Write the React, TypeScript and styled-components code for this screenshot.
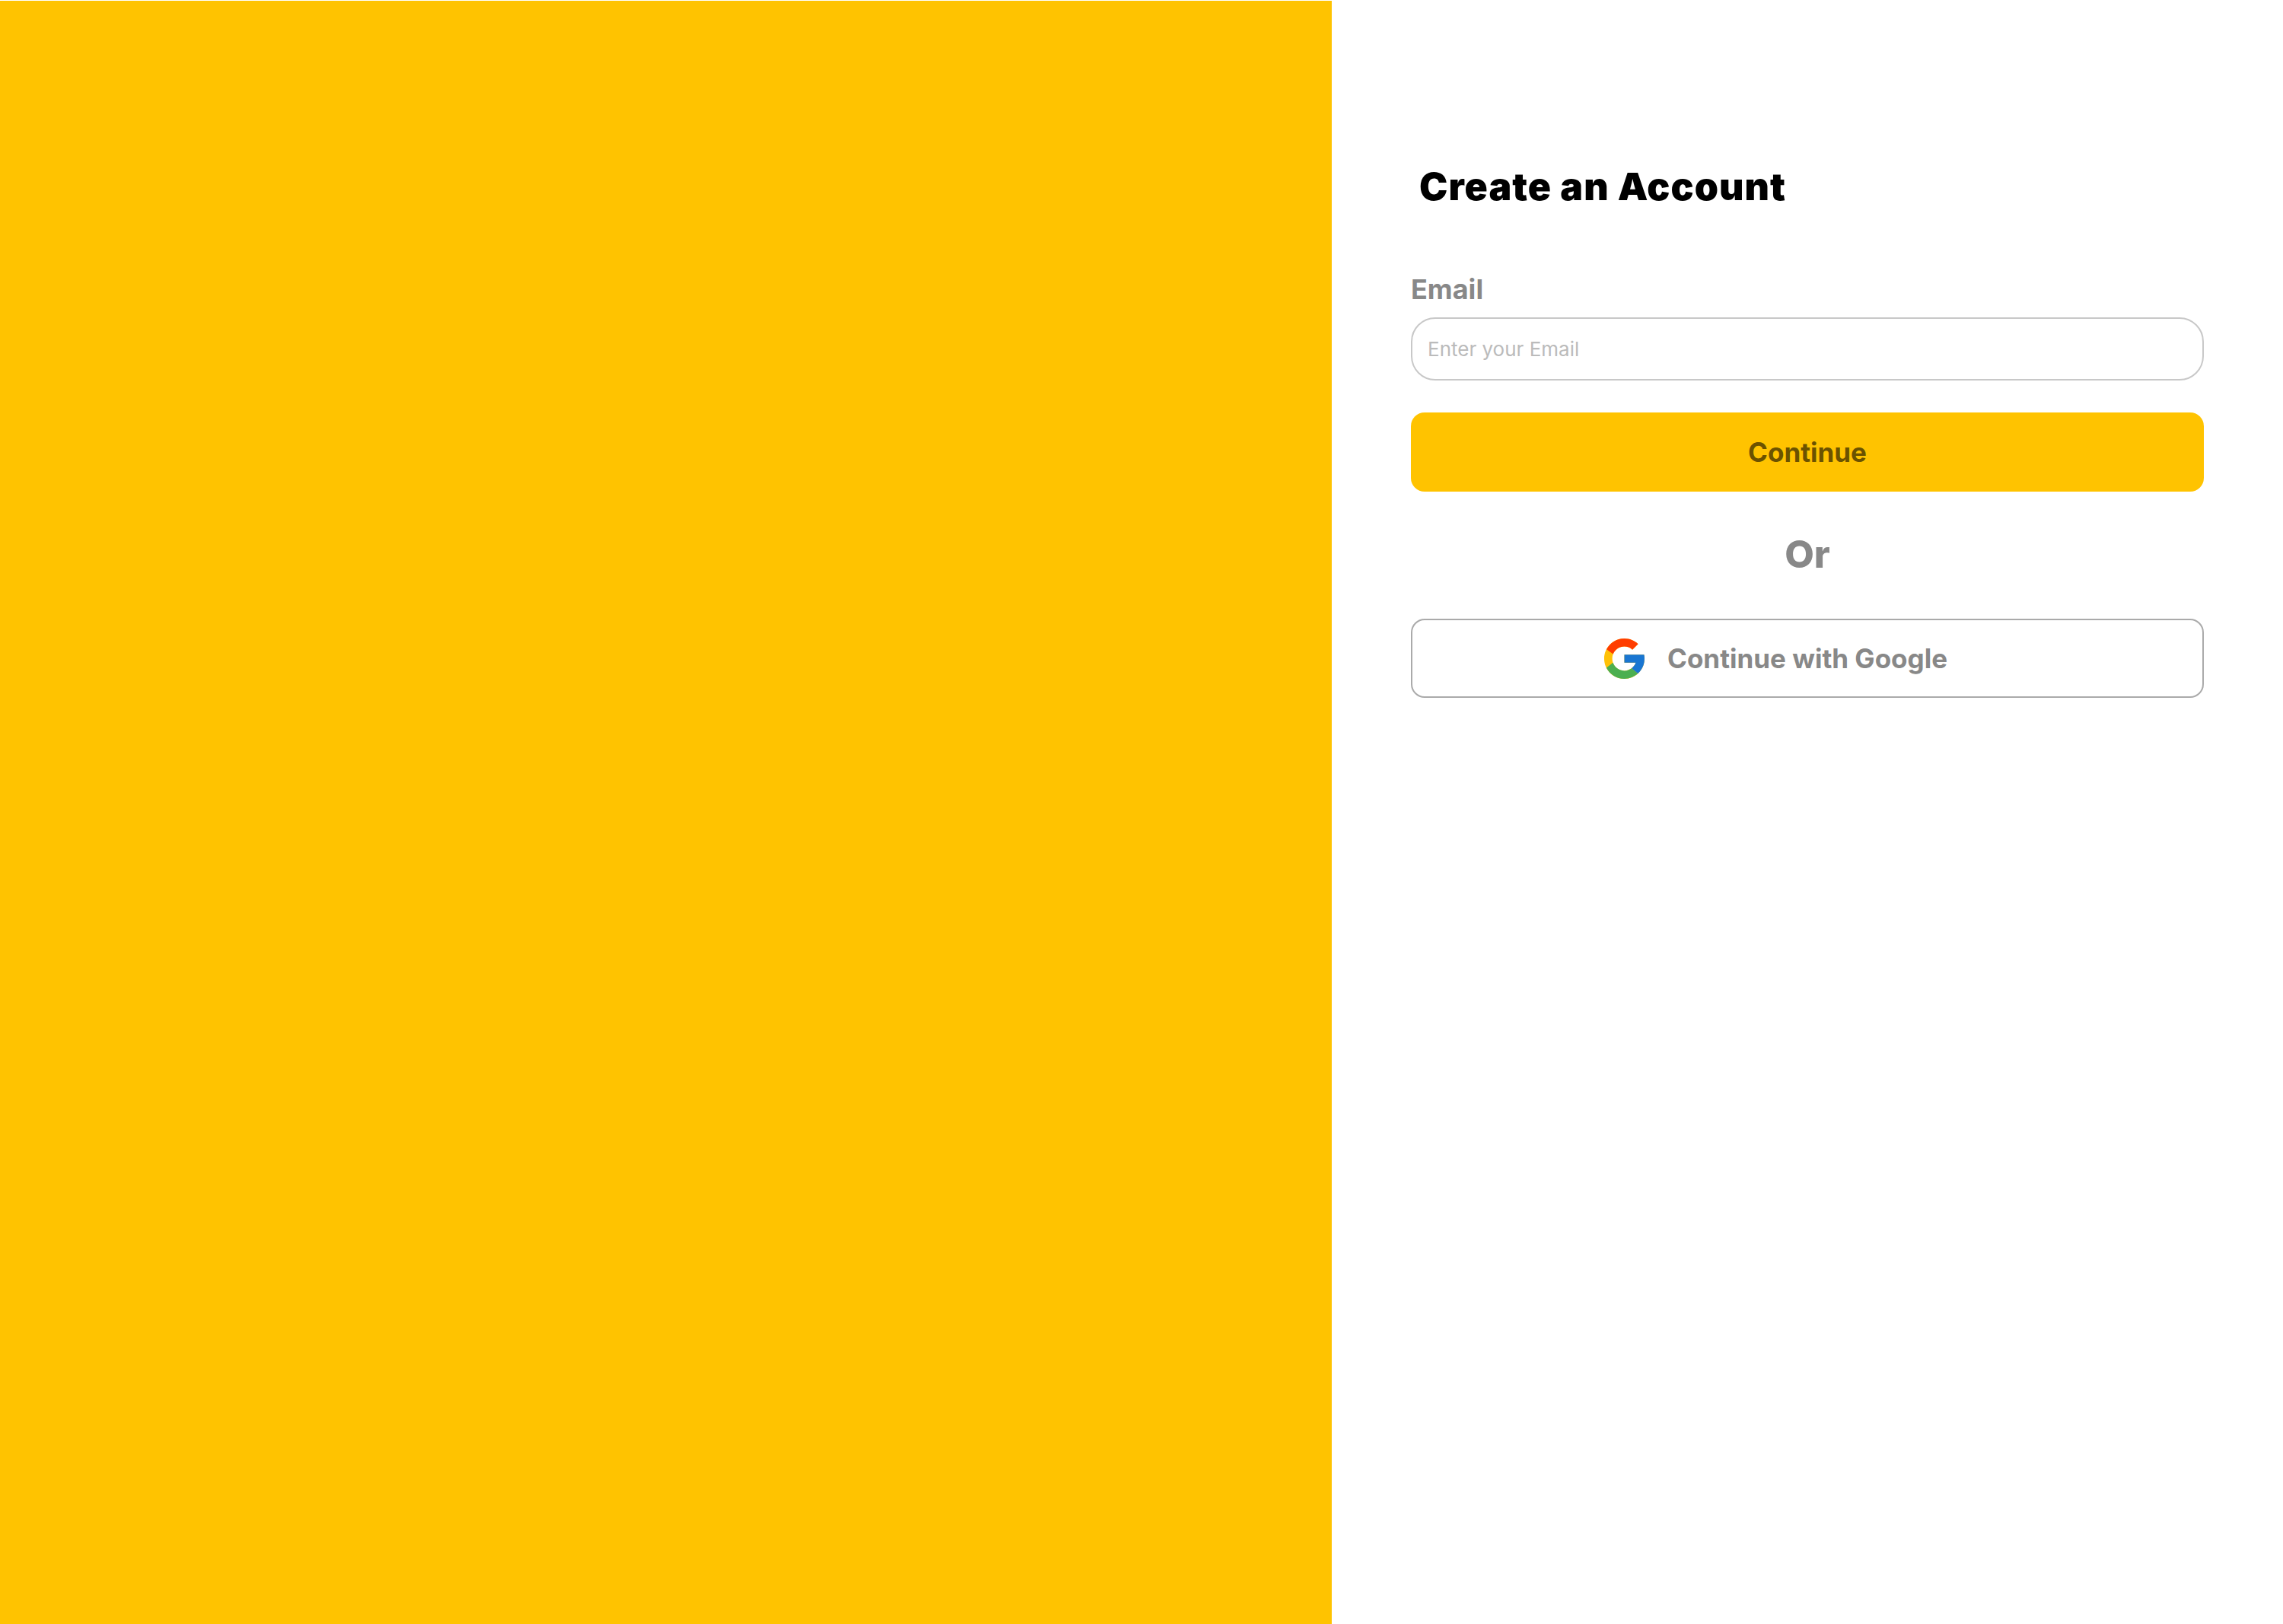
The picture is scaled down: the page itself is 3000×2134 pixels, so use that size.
import React from "react";
import styled, { createGlobalStyle } from "styled-components";

const GlobalStyle = createGlobalStyle`
  html, body { margin: 0; padding: 0; background: #ffffff; }
  * { box-sizing: border-box; }
  body { font-family: Inter, "Noto Sans", sans-serif; }
`;

const Page = styled.div`
  display: flex;
  width: 3000px;
  height: 2134px;
  background: #ffffff;
`;

const ColorPanel = styled.div`
  flex: 0 0 1750px;
  margin-top: 1px;
  background: #ffc300;
`;

const FormPanel = styled.main`
  flex: 1;
  padding: 210px 104px 0;
`;

const Title = styled.h1`
  margin: 0 0 78px 11px;
  height: 70px;
  font-size: 50px;
  line-height: 70px;
  font-weight: 900;
  letter-spacing: 1.05px;
  color: #000000;
`;

const FieldLabel = styled.label`
  display: block;
  height: 44px;
  margin-bottom: 15px;
  font-size: 36px;
  line-height: 44px;
  font-weight: 700;
  color: #888888;
`;

const TextInput = styled.input`
  display: block;
  width: 100%;
  height: 83px;
  padding: 0 20px;
  border: 2px solid #c8c8c8;
  border-radius: 32px;
  background: #ffffff;
  font-family: Inter, sans-serif;
  font-size: 26px;
  color: #333333;
  &::placeholder { color: #bbbbbb; opacity: 1; }
`;

const ActionButton = styled.button<{ $outlined?: boolean }>`
  display: grid;
  grid-template-columns: 1fr auto 1fr;
  align-items: center;
  column-gap: 30px;
  width: 100%;
  height: 104px;
  padding: 0;
  border-radius: 18px;
  border: ${(p) => (p.$outlined ? "2px solid #aaaaaa" : "none")};
  background: ${(p) => (p.$outlined ? "#ffffff" : "#ffc300")};
  color: ${(p) => (p.$outlined ? "#888888" : "#6b5200")};
  font-family: Inter, sans-serif;
  font-size: 35px;
  font-weight: 700;
`;

const ButtonLabel = styled.span`
  grid-column: 2;
`;

const ButtonIcon = styled.span`
  grid-column: 1;
  justify-self: end;
  display: flex;
`;

const PrimaryRow = styled.div`
  margin-top: 42px;
`;

const Divider = styled.div`
  height: 167px;
  padding-bottom: 3px;
  display: flex;
  align-items: center;
  justify-content: center;
  font-size: 50px;
  font-weight: 800;
  color: #888888;
`;

const GoogleMark = () => (
  <svg width="53" height="53" viewBox="4 4 40 40" aria-hidden="true">
    <path fill="#FFC107" d="M43.611,20.083H42V20H24v8h11.303c-1.649,4.657-6.08,8-11.303,8c-6.627,0-12-5.373-12-12c0-6.627,5.373-12,12-12c3.059,0,5.842,1.154,7.961,3.039l5.657-5.657C34.046,6.053,29.268,4,24,4C12.955,4,4,12.955,4,24c0,11.045,8.955,20,20,20c11.045,0,20-8.955,20-20C44,22.659,43.862,21.35,43.611,20.083z" />
    <path fill="#FF3D00" d="M6.306,14.691l6.571,4.819C14.655,15.108,18.961,12,24,12c3.059,0,5.842,1.154,7.961,3.039l5.657-5.657C34.046,6.053,29.268,4,24,4C16.318,4,9.656,8.337,6.306,14.691z" />
    <path fill="#4CAF50" d="M24,44c5.166,0,9.86-1.977,13.409-5.192l-6.19-5.238C29.211,35.091,26.715,36,24,36c-5.202,0-9.619-3.317-11.283-7.946l-6.522,5.025C9.505,39.556,16.227,44,24,44z" />
    <path fill="#1976D2" d="M43.611,20.083H42V20H24v8h11.303c-0.792,2.237-2.231,4.166-4.087,5.571c0.001-0.001,0.002-0.001,0.003-0.002l6.19,5.238C36.971,39.205,44,34,44,24C44,22.659,43.862,21.35,43.611,20.083z" />
  </svg>
);

export default function App() {
  return (
    <>
      <GlobalStyle />
      <Page>
        <ColorPanel />
        <FormPanel>
          <Title>Create an Account</Title>
          <FieldLabel htmlFor="email">Email</FieldLabel>
          <TextInput id="email" type="email" placeholder="Enter your Email" />
          <PrimaryRow>
            <ActionButton type="button">
              <ButtonLabel>Continue</ButtonLabel>
            </ActionButton>
          </PrimaryRow>
          <Divider>Or</Divider>
          <ActionButton type="button" $outlined>
            <ButtonIcon>
              <GoogleMark />
            </ButtonIcon>
            <ButtonLabel>Continue with Google</ButtonLabel>
          </ActionButton>
        </FormPanel>
      </Page>
    </>
  );
}
